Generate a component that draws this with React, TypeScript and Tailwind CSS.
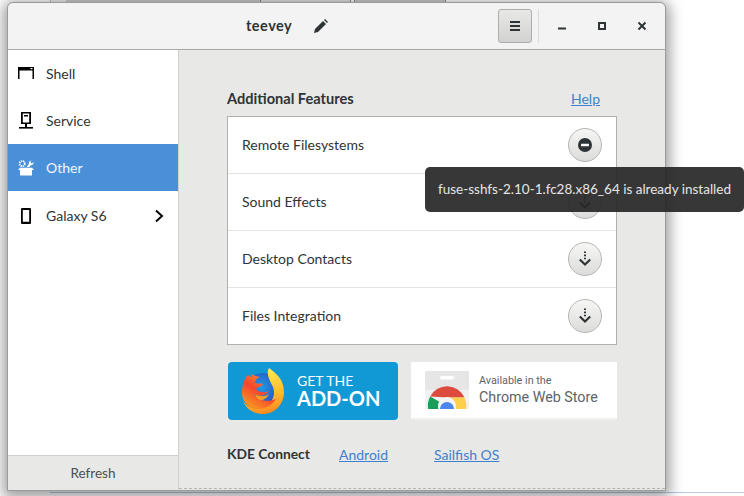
import React from 'react';

const font = "font-['Lato','Noto_Sans',sans-serif]";

function DownloadIcon() {
  return (
    <svg width="14" height="16" viewBox="0 0 14 16" fill="none" stroke="#2e3436">
      <path d="M7 0.5v1.6M7 3.6v1.6M7 6.7v1.6" strokeWidth="2" />
      <path d="M1.8 8.5l5.2 5 5.2-5" strokeWidth="2.2" />
    </svg>
  );
}

function RemoveIcon() {
  return (
    <svg width="14" height="14" viewBox="0 0 14 14">
      <circle cx="7" cy="7" r="7" fill="#2e3436" />
      <rect x="3" y="5.8" width="8" height="2.4" rx="0.5" fill="#fff" />
    </svg>
  );
}

function RoundButton({ installed }: { installed?: boolean }) {
  return (
    <div className="flex h-[34px] w-[34px] items-center justify-center rounded-full border border-[#b5b5b3] bg-gradient-to-b from-[#f6f6f5] to-[#dcdcda]">
      {installed ? <RemoveIcon /> : <DownloadIcon />}
    </div>
  );
}

function ShellIcon() {
  return (
    <svg width="16" height="16" viewBox="0 0 16 16" fill="#000">
      <path d="M0 1h16v12h-1.5V4.5h-13V13H0z" />
      <rect x="12.5" y="2" width="2" height="1.2" fill="#fff" />
    </svg>
  );
}

function ServiceIcon() {
  return (
    <svg width="16" height="18" viewBox="0 0 16 18" fill="#000">
      <path fillRule="evenodd" d="M3 0h10v12H3zM4.8 1.6v8.8h6.4V1.6z" />
      <rect x="6" y="3" width="4" height="1.5" />
      <rect x="7" y="12" width="2" height="3" />
      <rect x="1" y="15" width="14" height="1.6" />
    </svg>
  );
}

function OtherIcon() {
  return (
    <svg width="16" height="16" viewBox="0 0 16 16" fill="#fff">
      <circle cx="4.2" cy="3.6" r="2.6" fill="none" stroke="#fff" strokeWidth="1.7" strokeDasharray="1.4 0.7" />
      <path d="M8.6 7l2.3-3C10.3 2.3 11.5 0.6 13.4 0.4L12.4 2.3 13.8 3.4 15.6 1.9C15.9 3.8 14.6 5.3 12.6 5.2L11.4 7z" />
      <path d="M2 7.8h12L16 10h-2V15.5H2V10H0z" />
    </svg>
  );
}

function PhoneIcon() {
  return (
    <svg width="16" height="16" viewBox="0 0 16 16" fill="#000">
      <path fillRule="evenodd" d="M4 0h8a1 1 0 011 1v14a1 1 0 01-1 1H4a1 1 0 01-1-1V1a1 1 0 011-1zM4.8 2v11.8h6.4V2z" />
    </svg>
  );
}

function FirefoxLogo() {
  return (
    <svg width="46" height="48" viewBox="0 0 46 48">
      <defs>
        <linearGradient id="fox" x1="0.8" y1="0" x2="0.2" y2="1">
          <stop offset="0" stopColor="#ff9a2a" />
          <stop offset="0.5" stopColor="#f8452d" />
          <stop offset="1" stopColor="#f9a01f" />
        </linearGradient>
        <linearGradient id="tail" x1="0.3" y1="0" x2="0.5" y2="1">
          <stop offset="0" stopColor="#fff44f" />
          <stop offset="0.6" stopColor="#ffbd2e" />
          <stop offset="1" stopColor="#ff8a1f" />
        </linearGradient>
        <radialGradient id="globe" cx="0.45" cy="0.35" r="0.7">
          <stop offset="0" stopColor="#1e9ce8" />
          <stop offset="0.55" stopColor="#2a5fc7" />
          <stop offset="1" stopColor="#3b2a8c" />
        </radialGradient>
      </defs>
      <circle cx="23" cy="26" r="20" fill="url(#globe)" />
      <path d="M29 1c5 4 15 10 15 24 0 12-9 22-21 22C14 47 6 42 3 34c5 8 16 9 23 5 8-5 10-14 6-21C29 12 26 6 29 1z" fill="url(#tail)" />
      <path d="M8 8c1 1 3 2 4 2l-1-3c2 1 5 2 9 3-3 1-5 3-5 6 2 1 5 0 8 1-1 3-6 3-7 5 3 4 9 4 13 2-3 5-11 6-15 3 3 6 13 9 22 5-4 6-10 10-18 10C8 42 2 34 2 26 2 18 4 12 8 8z" fill="url(#fox)" />
      <path d="M15 27c4 3 10 3 14 0-2 4-5 6-8 6-3 0-5-3-6-6z" fill="#f9a01f" />
    </svg>
  );
}

function ChromeBag() {
  return (
    <svg width="44" height="38" viewBox="0 0 44 38">
      <rect width="44" height="19" fill="#e6e6e6" />
      <rect y="19" width="44" height="19" fill="#f1f1f1" />
      <rect x="15" y="5" width="14" height="3.5" rx="1.75" fill="#fff" />
      <path d="M5.2 25.5A19 19 0 0 1 39.5 26.5L22 26.5z" fill="#dd4b3e" />
      <path d="M5.2 25.5L22 35 16.5 38H3.2A19 19 0 0 1 5.2 25.5z" fill="#1a9d5a" />
      <path d="M22 26.5H39.5A19 19 0 0 1 41 38H22z" fill="#fdd04b" />
      <circle cx="22" cy="35" r="9" fill="#f4f4f4" />
      <path d="M15 38A7 7 0 1 1 29 38z" fill="#4a86ee" />
    </svg>
  );
}

const features = ['Remote Filesystems', 'Sound Effects', 'Desktop Contacts', 'Files Integration'];

export default function App() {
  return (
    <div className={`relative h-[496px] w-[744px] overflow-hidden bg-white pl-[7px] pt-[2px] ${font}`}>
      {/* windows behind */}
      <div className="absolute left-[50px] top-0 flex h-[3px] w-[396px]">
        <div className="w-[16px] border-l border-[#b7c9e4] bg-[#f0f0ef]" />
        <div className="w-[194px] bg-[#cfcfcd]" />
        <div className="w-[90px] border-l border-[#8f8f8d] bg-[#e2e2e0]" />
        <div className="w-[5px] border-x border-[#8f8f8d] bg-white" />
        <div className="flex-1 border-r border-[#8f8f8d] bg-[#cfcfcd]" />
      </div>
      <div className="absolute bottom-[3px] left-[50px] h-[1px] w-[694px] bg-[#b7c9e4]" />

      <div className="relative flex h-[489px] w-[659px] flex-col rounded-t-[6px] border border-[#9a9a98] bg-[#e8e8e7] shadow-[0_3px_14px_4px_rgba(0,0,0,0.38)]">
        <header className="flex h-[47px] shrink-0 items-center rounded-t-[6px] border-b border-[#a8a8a6] bg-[#f3f3f3] pl-[238px] text-[#2e3436]">
          <span className="w-[68px] text-[14.5px] font-bold tracking-[0.5px]">teevey</span>
          <svg width="14" height="14" viewBox="0 0 14 14" fill="#2e3436">
            <path d="M0 14l1-4 8-8 3 3-8 8zM10 1l1-1 3 3-1 1z" />
          </svg>
          <div className="ml-[170px] flex h-[34px] w-[34px] items-center justify-center rounded-[3px] border border-[#adadab] bg-gradient-to-b from-[#e8e8e6] to-[#d2d2d0]">
            <svg width="12" height="12" viewBox="0 0 12 12" fill="#2e3436">
              <rect x="1" y="1" width="10" height="2" />
              <rect x="1" y="5" width="10" height="2" />
              <rect x="1" y="9" width="10" height="2" />
            </svg>
          </div>
          <div className="ml-[6px] h-[34px] w-px bg-[#dcdcda]" />
          <svg className="ml-[17px]" width="12" height="12" viewBox="0 0 12 12" fill="#2e3436">
            <rect x="2" y="7.5" width="8" height="2" />
          </svg>
          <svg className="ml-[28px]" width="12" height="12" viewBox="0 0 12 12" fill="none" stroke="#2e3436" strokeWidth="2">
            <rect x="3" y="3" width="6" height="6" />
          </svg>
          <svg className="ml-[28px]" width="12" height="12" viewBox="0 0 12 12" fill="none" stroke="#2e3436" strokeWidth="2">
            <path d="M2.5 2.5l7 7M9.5 2.5l-7 7" />
          </svg>
        </header>

        <div className="flex min-h-0 flex-1">
          <aside className="flex w-[171px] shrink-0 flex-col border-r border-[#cfcfcd] bg-white">
            <ul className="flex-1 text-[14px] text-[#2e3436]">
              <li className="flex h-[47px] items-center gap-[12px] pl-[10px]">
                <ShellIcon />
                Shell
              </li>
              <li className="flex h-[47px] items-center gap-[12px] pl-[10px]">
                <ServiceIcon />
                Service
              </li>
              <li className="flex h-[47px] items-center gap-[12px] bg-[#4a90d9] pl-[10px] text-[#f2f6fb]">
                <OtherIcon />
                Other
              </li>
              <li className="mt-px flex h-[47px] items-center pl-[10px]">
                <PhoneIcon />
                <span className="ml-[12px] flex-1">Galaxy S6</span>
                <svg className="mr-[13px]" width="12" height="14" viewBox="0 0 12 14" fill="none" stroke="#000" strokeWidth="2">
                  <path d="M3 1.5L9 7l-6 5.5" />
                </svg>
              </li>
            </ul>
            <div className="flex h-[35px] items-center justify-center border-t border-[#cfcfcd] bg-[#e8e8e7] text-[13.5px] text-[#4a4f50]">
              Refresh
            </div>
          </aside>

          <main className="mb-px flex min-w-0 flex-1 flex-col border-b border-dashed border-[#b5b5b3] pl-[48px] pr-[48px] pt-[37px]">
            <div className="flex h-[22px] items-center justify-between pr-[17px]">
              <h2 className="mt-[2px] text-[14.6px] font-bold text-[#2e3436]">Additional Features</h2>
              <a className="text-[14px] text-[#3f80cf] underline">Help</a>
            </div>
            <ul className="mt-[7px] h-[229px] w-[390px] border border-[#b0b0ae] bg-white text-[14px] text-[#2e3436]">
              {features.map((name, i) => (
                <li
                  key={name}
                  className={`flex items-center justify-between pl-[14px] pr-[14px] ${i > 0 ? 'h-[57px] border-t border-[#e3e3e1]' : 'h-[56px]'}`}
                >
                  <span className="mb-[2px]">{name}</span>
                  <RoundButton installed={i === 0} />
                </li>
              ))}
            </ul>
            <div className="mt-[17px] flex h-[58px] w-[390px] items-stretch gap-[13px] pl-px">
              <div className="flex w-[170px] items-center rounded-[4px] bg-[#1199d6] pl-[12px] text-white">
                <FirefoxLogo />
                <div className="ml-[11px] flex flex-col">
                  <span className="text-[14px] leading-[14px]">GET THE</span>
                  <span className="text-[20px] font-bold leading-[20px]">ADD-ON</span>
                </div>
              </div>
              <div className="flex flex-1 items-center border-b-2 border-[#efefee] bg-white pl-[14px]">
                <ChromeBag />
                <div className="ml-[10px] flex flex-col text-[#5f6368] font-['Roboto',sans-serif]">
                  <span className="text-[10.8px] leading-[15px]">Available in the</span>
                  <span className="text-[14.3px] leading-[19px]">Chrome Web Store</span>
                </div>
              </div>
            </div>
            <div className="mt-[24px] flex items-center text-[14px]">
              <span className="w-[112px] text-[13.8px] font-bold text-[#2e3436]">KDE Connect</span>
              <a className="w-[95px] text-[#3f80cf] underline">Android</a>
              <a className="text-[#3f80cf] underline">Sailfish OS</a>
            </div>
          </main>
        </div>
      </div>

      <div className="absolute left-[425px] top-[167px] flex h-[45px] w-[319px] items-center rounded-[5px] bg-[#282828]/[0.93] pl-[13px] text-[13.5px] text-[#e6e6e6]">
        fuse-sshfs-2.10-1.fc28.x86_64 is already installed
      </div>
    </div>
  );
}
